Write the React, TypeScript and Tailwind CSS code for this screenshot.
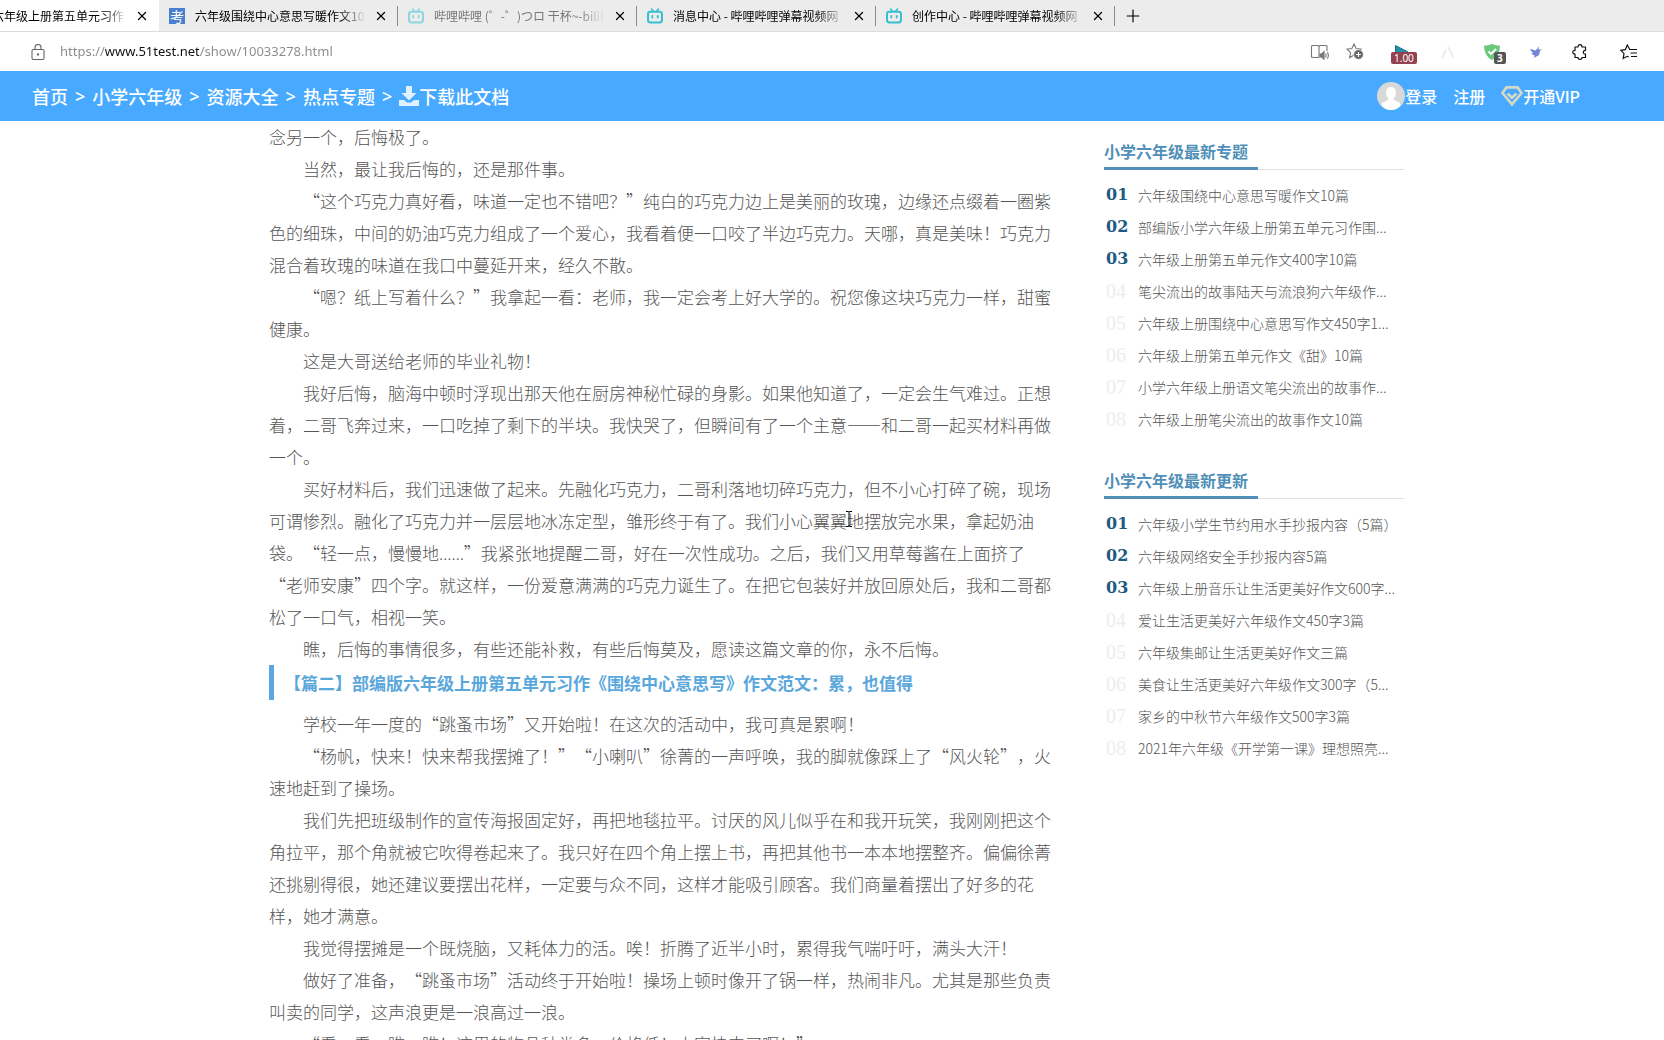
import React from "react"
import clsx from "clsx"
import { Plus, X } from "lucide-react"

interface TabProps {
  title: string
  icon?: React.ReactNode
  active?: boolean
  faded?: boolean
}

interface RankListProps {
  title: string
  items: string[]
}

const topics = [
  "六年级围绕中心意思写暖作文10篇",
  "部编版小学六年级上册第五单元习作围...",
  "六年级上册第五单元作文400字10篇",
  "笔尖流出的故事陆天与流浪狗六年级作...",
  "六年级上册围绕中心意思写作文450字1...",
  "六年级上册第五单元作文《甜》10篇",
  "小学六年级上册语文笔尖流出的故事作...",
  "六年级上册笔尖流出的故事作文10篇",
]

const updates = [
  "六年级小学生节约用水手抄报内容（5篇）",
  "六年级网络安全手抄报内容5篇",
  "六年级上册音乐让生活更美好作文600字...",
  "爱让生活更美好六年级作文450字3篇",
  "六年级集邮让生活更美好作文三篇",
  "美食让生活更美好六年级作文300字（5...",
  "家乡的中秋节六年级作文500字3篇",
  "2021年六年级《开学第一课》理想照亮...",
]

const partOne = [
  "当然，最让我后悔的，还是那件事。",
  "“这个巧克力真好看，味道一定也不错吧？”纯白的巧克力边上是美丽的玫瑰，边缘还点缀着一圈紫色的细珠，中间的奶油巧克力组成了一个爱心，我看着便一口咬了半边巧克力。天哪，真是美味！巧克力混合着玫瑰的味道在我口中蔓延开来，经久不散。",
  "“嗯？纸上写着什么？”我拿起一看：老师，我一定会考上好大学的。祝您像这块巧克力一样，甜蜜健康。",
  "这是大哥送给老师的毕业礼物！",
  "我好后悔，脑海中顿时浮现出那天他在厨房神秘忙碌的身影。如果他知道了，一定会生气难过。正想着，二哥飞奔过来，一口吃掉了剩下的半块。我快哭了，但瞬间有了一个主意——和二哥一起买材料再做一个。",
  "买好材料后，我们迅速做了起来。先融化巧克力，二哥利落地切碎巧克力，但不小心打碎了碗，现场可谓惨烈。融化了巧克力并一层层地冰冻定型，雏形终于有了。我们小心翼翼地摆放完水果，拿起奶油袋。“轻一点，慢慢地……”我紧张地提醒二哥，好在一次性成功。之后，我们又用草莓酱在上面挤了“老师安康”四个字。就这样，一份爱意满满的巧克力诞生了。在把它包装好并放回原处后，我和二哥都松了一口气，相视一笑。",
  "瞧，后悔的事情很多，有些还能补救，有些后悔莫及，愿读这篇文章的你，永不后悔。",
]

const partTwo = [
  "学校一年一度的“跳蚤市场”又开始啦！在这次的活动中，我可真是累啊！",
  "“杨帆，快来！快来帮我摆摊了！”“小喇叭”徐菁的一声呼唤，我的脚就像踩上了“风火轮”，火速地赶到了操场。",
  "我们先把班级制作的宣传海报固定好，再把地毯拉平。讨厌的风儿似乎在和我开玩笑，我刚刚把这个角拉平，那个角就被它吹得卷起来了。我只好在四个角上摆上书，再把其他书一本本地摆整齐。偏偏徐菁还挑剔得很，她还建议要摆出花样，一定要与众不同，这样才能吸引顾客。我们商量着摆出了好多的花样，她才满意。",
  "我觉得摆摊是一个既烧脑，又耗体力的活。唉！折腾了近半小时，累得我气喘吁吁，满头大汗！",
  "做好了准备，“跳蚤市场”活动终于开始啦！操场上顿时像开了锅一样，热闹非凡。尤其是那些负责叫卖的同学，这声浪更是一浪高过一浪。",
  "“看一看，瞧一瞧！这里的物品种类多，价格低！大家快来买啊！”",
]

const ExamIcon = () => (
  <span className="flex size-4 items-center justify-center bg-[#4a7fd0] text-sm leading-4 text-white">考</span>
)

const BiliIcon = () => (
  <svg viewBox="0 0 16 16" className="size-4" fill="none" stroke="#35bfd0" strokeWidth="2" strokeLinecap="round">
    <path d="M4.5 1l2 2.2M11.5 1l-2 2.2" strokeWidth="1.6" />
    <rect x="1" y="3.8" width="14" height="10.6" rx="2.4" />
    <path d="M5.3 7.8v1.8M10.7 7.8v1.8" strokeWidth="1.8" />
  </svg>
)

const Tab = ({ title, icon, active, faded }: TabProps) => (
  <div
    className={clsx(
      "flex shrink-0 items-center",
      active ? "w-[159px] bg-white pr-2.5" : "w-[239px] pr-2.5 pl-2.5",
    )}
  >
    {icon && <span className={clsx("mr-2.5 shrink-0", faded && "opacity-50")}>{icon}</span>}
    <button
      className={clsx(
        "min-w-0 flex-1 overflow-hidden text-left text-xs whitespace-nowrap [mask-image:linear-gradient(to_right,#000_84%,transparent)]",
        faded ? "text-[#777]" : "text-black",
        active && "-ml-2",
      )}
    >
      {title}
    </button>
    <button aria-label="关闭标签页" className="ml-2 shrink-0">
      <X className="size-3.5 text-black" strokeWidth={2.2} />
    </button>
  </div>
)

const Separator = () => <div className="-ml-px h-5 w-px shrink-0 self-center bg-[#8a8a8a]" />

const TabStrip = () => (
  <div className="flex h-8 shrink-0 border-b border-[#dcdcdc] bg-[#ececec]">
    <Tab title="六年级上册第五单元习作" active />
    <Tab title="六年级围绕中心意思写暖作文10篇" icon={<ExamIcon />} />
    <Separator />
    <Tab title="哔哩哔哩 (゜-゜)つロ 干杯~-bilibili" icon={<BiliIcon />} faded />
    <Separator />
    <Tab title="消息中心 - 哔哩哔哩弹幕视频网" icon={<BiliIcon />} />
    <Separator />
    <Tab title="创作中心 - 哔哩哔哩弹幕视频网" icon={<BiliIcon />} />
    <Separator />
    <button aria-label="新建标签页" className="px-2">
      <Plus className="size-5 text-black" strokeWidth={1.4} />
    </button>
  </div>
)

const starPath = "M8 1l2.1 4.6 4.9.6-3.6 3.4 1 5L8 12.1 3.6 14.6l1-5L1 6.2l4.9-.6z"

const AddressBar = () => (
  <div className="flex h-[39px] shrink-0 items-center pr-7 pl-[31px]">
    <svg viewBox="0 0 14 16" className="h-4 w-3.5 shrink-0" fill="none" stroke="#666" strokeWidth="1.1">
      <rect x="1" y="5.5" width="12" height="10" rx="1.5" />
      <path d="M4 5.5V3.5a3 3 0 0 1 6 0v2" />
      <circle cx="7" cy="10.5" r=".6" fill="#666" />
    </svg>
    <input
      aria-label="地址"
      readOnly
      defaultValue="https://www.51test.net/show/10033278.html"
      className="ml-[15px] min-w-0 flex-1 bg-[linear-gradient(to_right,#8a8a8a_45px,#111_45px,#111_139px,#8a8a8a_139px)] bg-clip-text font-['Noto_Sans'] text-[13px] text-transparent outline-none"
    />
    <div className="flex shrink-0 items-center">
      <button aria-label="大声朗读" className="w-9">
        <svg viewBox="0 0 20 16" className="h-4 w-5" fill="none" stroke="#777" strokeWidth="1.1">
          <path d="M9 13.5H3.5L1.5 13V2l1-.5H8l1 1 1-1h6l1 .5v5M9 2.5v11" />
          <path d="M10 10v3h1.5l2.5 2.2V7.8L11.5 10z" fill="#777" />
          <path d="M15.5 9.5q1.2 2 0 4M17.3 8.3q2.2 3.2 0 6.4" />
        </svg>
      </button>
      <button aria-label="添加到收藏夹" className="w-[49px]">
        <svg viewBox="0 0 18 17" className="h-[17px] w-[18px]" fill="none" stroke="#777" strokeWidth="1.1">
          <path d={starPath} />
          <circle cx="12.5" cy="11.5" r="4.8" fill="#666" stroke="#fff" strokeWidth=".6" />
          <path d="M12.5 9v5M10 11.5h5" stroke="#fff" />
        </svg>
      </button>
      <button aria-label="播放速度" className="relative h-6 w-[46px]">
        <svg viewBox="0 0 14 14" className="h-3.5 w-3.5" fill="#2590a8" stroke="#14708c">
          <path d="M.5.5L13 7 .5 13.5z" />
        </svg>
        <span className="absolute top-3 -left-1 rounded-[2px] bg-[#93404f] px-[3px] font-['Noto_Sans'] text-[10px] leading-3 text-white">
          1.00
        </span>
      </button>
      <button aria-label="扩展" className="w-[43px]">
        <svg viewBox="0 0 14 14" className="h-3.5 w-3.5" fill="none" stroke="#ececec" strokeWidth="2">
          <path d="M1 13L5 5M7 2q3 4 5 11" />
        </svg>
      </button>
      <button aria-label="广告拦截" className="relative h-6 w-[46px]">
        <svg viewBox="0 0 16 16" className="h-4 w-4" fill="#69c97c">
          <path d="M8 0q4 1.8 8 1.8Q16 12 8 16 0 12 0 1.8 4 1.8 8 0z" />
          <path d="M4.5 7.5L7 10l5-5" fill="none" stroke="#fff" strokeWidth="1.8" />
        </svg>
        <span className="absolute top-3 left-2.5 rounded-[2px] bg-[#555] px-[3px] font-['Noto_Sans'] text-[10px] leading-3 font-bold text-white">
          3
        </span>
      </button>
      <button aria-label="飞鸟" className="w-[42px]">
        <svg viewBox="0 0 12 12" className="size-3" fill="#7486d8">
          <path d="M.2 2.8l5.3 1.7Q7 4.2 8.5.3L8.8 3.8l3-.8-2 2.200q0 4.300-3.300 5.200L4 11.800l.6-2.400Q1.800 8.800 1.500 7l1.600-.2Q.8 5.500.2 2.800z" />
        </svg>
      </button>
      <button aria-label="扩展程序" className="w-12">
        <svg viewBox="0 0 16 16" className="size-4" fill="none" stroke="#111" strokeWidth="1.2" strokeLinejoin="round">
          <path d="M3 3h3q0-2.300 2-2.300T10 3h3.500v3.300q-2.200 0-2.200 1.900t2.200 1.900V13.500H10q0 1.800-2 1.800t-2-1.800H3V10Q.8 10 .8 8.200T3 6.400z" />
        </svg>
      </button>
      <button aria-label="收藏夹" className="w-4">
        <svg viewBox="0 0 17 16" className="h-4 w-[17px]" fill="none" stroke="#111" strokeWidth="1.2">
          <path d="M9.5 5L7.3 1 5.3 5.7.8 6.3 4 9.7l-.8 4.8 4-2.2 1.5.7" />
          <path d="M9 5.5h8M10.5 9h6.5M11 12.5h6" />
        </svg>
      </button>
    </div>
  </div>
)

const crumbs = ["首页", "小学六年级", "资源大全", "热点专题"]

const SiteHeader = () => (
  <header className="flex h-[50px] shrink-0 items-center justify-between bg-[#47a9ff] pr-[84px] pl-8 text-white">
    <nav className="flex items-center gap-[7px] text-lg font-medium">
      {crumbs.map((c) => (
        <React.Fragment key={c}>
          <a href="#">{c}</a>
          <span className="font-['Noto_Sans']">&gt;</span>
        </React.Fragment>
      ))}
      <a href="#" className="flex items-center">
        <svg viewBox="0 0 20 20" className="size-5" fill="#dff0ff">
          <path d="M7 0h6v7h4.5L10 14.5 2.5 7H7z" />
          <path d="M0 14h5l3 2.5h4L15 14h5v6H0z" />
        </svg>
        下载此文档
      </a>
    </nav>
    <div className="flex items-center font-medium">
      <a href="#" className="flex items-center">
        <svg viewBox="0 0 28 28" className="size-7">
          <circle cx="14" cy="14" r="14" fill="#d8d8d8" />
          <path d="M14 5q5 0 5 5.5 0 4-2.5 6.2.3 1.8 6 3.8.8.5.8 3Q19.5 28 14 28t-9.3-4.5q0-2.5.8-3 5.7-2 6-3.8Q9 14.5 9 10.5 9 5 14 5z" fill="#fff" />
        </svg>
        登录
      </a>
      <a href="#" className="ml-4">注册</a>
      <a href="#" className="ml-4 flex items-center">
        <svg viewBox="0 0 22 20" className="h-5 w-[22px]" fill="none" stroke="#d8d8c4" strokeWidth="2.6">
          <path d="M5.5 1.4h11L20.600 7 11 18.400 1.400 7z" />
          <path d="M6.5 7.5l4.5 4.3 4.5-4.3" />
        </svg>
        开通VIP
      </a>
    </div>
  </header>
)

const RankList = ({ title, items }: RankListProps) => (
  <section>
    <div className="border-b border-[#dfe3e6]">
      <h3 className="-mb-px w-[154px] border-b-3 border-[#4f8fb8] pb-0.5 text-base leading-7 font-bold text-[#4f8fb8]">{title}</h3>
    </div>
    <ol className="mt-[9px]">
      {items.map((item, i) => (
        <li key={item} className="flex h-8 items-center pl-0.5">
          <span
            className={clsx(
              "w-8",
              i < 3
                ? "font-['DejaVu_Serif'] text-base font-bold text-[#1d5b80]"
                : "font-['Liberation_Serif'] text-xl text-[#ededed]",
            )}
          >
            0{i + 1}
          </span>
          <a href="#" className="text-sm font-light whitespace-nowrap text-[#555]">{item}</a>
        </li>
      ))}
    </ol>
  </section>
)

// the ellipsis sits on the baseline, as in Latin text
const Paragraph = ({ text }: { text: string }) => (
  <p className="indent-[2em]">
    {text.split("……").map((part, i) => (
      <React.Fragment key={i}>
        {i > 0 && <span className="font-['Noto_Sans'] leading-none">……</span>}
        {part}
      </React.Fragment>
    ))}
  </p>
)

const Article = () => (
  <article className="relative min-w-0 flex-1 text-[17px] leading-8 font-light text-[#555]">
    <p>念另一个，后悔极了。</p>
    {partOne.map((p) => (
      <Paragraph key={p} text={p} />
    ))}
    <h2 className="mb-2 border-l-5 border-[#5aa7e4] pl-2.5 leading-[35px] font-bold text-[#5aa7dc]">
      【篇二】部编版六年级上册第五单元习作《围绕中心意思写》作文范文：累，也值得
    </h2>
    {partTwo.map((p) => (
      <Paragraph key={p} text={p} />
    ))}
    {/* mouse pointer resting over the text */}
    <svg viewBox="0 0 8 16" className="absolute top-[390px] left-[576px] h-4 w-2" fill="none" stroke="#000">
      <path d="M1 .5h2.5l.5.5.5-.5H7M4 1v14M1 15.5h2.5l.5-.5.5.5H7" />
    </svg>
  </article>
)

export default function App() {
  return (
    <div
      lang="zh-CN"
      className="flex h-screen flex-col overflow-hidden bg-white font-['Noto_Sans_CJK_SC',sans-serif] [text-spacing-trim:space-all]"
    >
      <TabStrip />
      <AddressBar />
      <SiteHeader />
      <main className="min-h-0 flex-1 overflow-hidden">
        <div className="mx-auto flex max-w-[1144px] gap-[50px] pl-[9px]">
          <Article />
          <aside className="flex w-[300px] shrink-0 flex-col gap-[31px] pt-4">
            <RankList title="小学六年级最新专题" items={topics} />
            <RankList title="小学六年级最新更新" items={updates} />
          </aside>
        </div>
      </main>
    </div>
  )
}
